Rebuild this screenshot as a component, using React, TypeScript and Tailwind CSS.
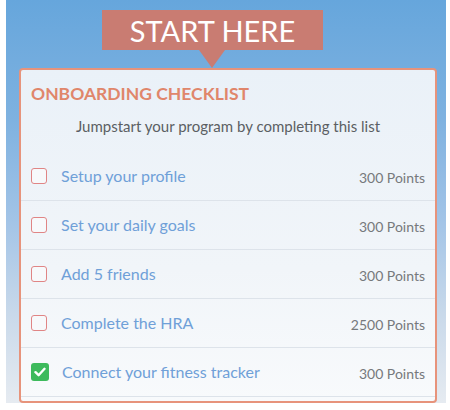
import React from "react";

const items = [
  { label: "Setup your profile", points: "300 Points", done: false },
  { label: "Set your daily goals", points: "300 Points", done: false },
  { label: "Add 5 friends", points: "300 Points", done: false },
  { label: "Complete the HRA", points: "2500 Points", done: false },
  { label: "Connect your fitness tracker", points: "300 Points", done: true },
];

export default function App() {
  return (
    <div className="w-[450px] h-[410px] bg-white overflow-hidden" style={{ fontFamily: "Lato, 'Open Sans', sans-serif" }}>
      <div className="ml-[6px] w-[440px] h-[403px] pt-[10px] flex flex-col bg-[linear-gradient(180deg,#66a6dc_0%,#7fb2e0_30%,#a3c4e7_55%,#c9d9ea_78%,#e6ebf1_100%)]">
        <div className="ml-[96px] w-[221px] h-[40px] bg-[#c97c72] flex items-center justify-center text-white text-[29px] leading-none">
          START HERE
        </div>
        <div className="ml-[193px] w-0 h-0 border-l-[13px] border-r-[13px] border-t-[18px] border-l-transparent border-r-transparent border-t-[#c97c72]" />
        <div className="ml-[13px] w-[418px] h-[335px] border-2 border-[#e7937b] rounded-[4px] bg-[linear-gradient(180deg,#eaf1f8_0%,#f1f5f9_60%,#f8fafc_100%)] flex flex-col">
          <div className="pl-[10px] pt-[12px] text-[17.5px] leading-[24px] font-bold text-[#e0866b]">
            ONBOARDING CHECKLIST
          </div>
          <div className="mt-[10px] text-center text-[15px] leading-[20px] text-[#5b5f63]">
            Jumpstart your program by completing this list
          </div>
          <div className="mt-[16px] flex flex-col">
            {items.map((it) => (
              <div key={it.label} className="h-[49px] border-b border-[#dde3ea] flex items-center pl-[10px] pr-[10px]">
                {it.done ? (
                  <div className="w-[18px] h-[18px] rounded-[3px] bg-[#3dba5c] flex items-center justify-center">
                    <svg width="12" height="10" viewBox="0 0 12 10">
                      <path d="M1.5 5.2 L4.6 8.2 L10.5 1.8" fill="none" stroke="white" strokeWidth="2.4" strokeLinecap="round" strokeLinejoin="round" />
                    </svg>
                  </div>
                ) : (
                  <div className="w-[16px] h-[16px] rounded-[3px] border-[1.5px] border-[#e08585] bg-[#f7f9fb]" />
                )}
                <div className={`${it.done ? "ml-[13px]" : "ml-[14px]"} text-[16px] text-[#6fa0d8] leading-[20px]`}>{it.label}</div>
                <div className="ml-auto text-[14px] text-[#76797c] leading-[20px] pt-[3px]">{it.points}</div>
              </div>
            ))}
          </div>
        </div>
      </div>
    </div>
  );
}
